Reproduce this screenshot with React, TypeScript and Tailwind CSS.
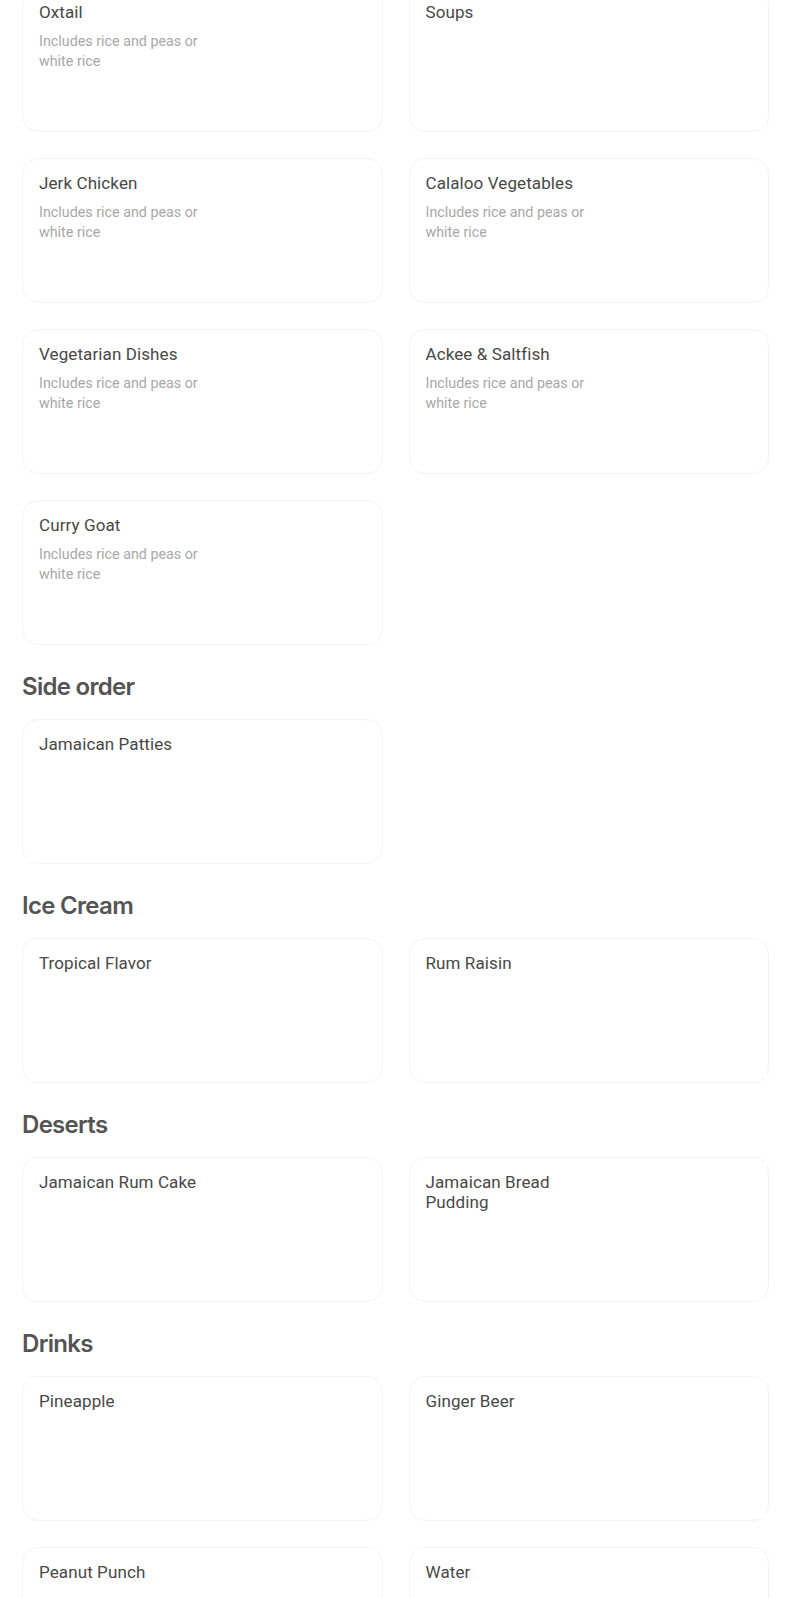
type Item = { name: string; description?: string };
type Section = { title?: string; items: Item[] };

const RICE = "Includes rice and peas or white rice";

const sections: Section[] = [
  {
    items: [
      { name: "Oxtail", description: RICE },
      { name: "Soups" },
      { name: "Jerk Chicken", description: RICE },
      { name: "Calaloo Vegetables", description: RICE },
      { name: "Vegetarian Dishes", description: RICE },
      { name: "Ackee & Saltfish", description: RICE },
      { name: "Curry Goat", description: RICE },
    ],
  },
  { title: "Side order", items: [{ name: "Jamaican Patties" }] },
  { title: "Ice Cream", items: [{ name: "Tropical Flavor" }, { name: "Rum Raisin" }] },
  {
    title: "Deserts",
    items: [{ name: "Jamaican Rum Cake" }, { name: "Jamaican Bread Pudding" }],
  },
  {
    title: "Drinks",
    items: [
      { name: "Pineapple" },
      { name: "Ginger Beer" },
      { name: "Peanut Punch" },
      { name: "Water" },
    ],
  },
];

function MenuCard({ item }: { item: Item }) {
  return (
    <div className="h-[145px] rounded-[16px] border border-[#f3f3f3] bg-white px-4 pt-[14px] pb-4">
      <div className="w-[170px]">
        <h3 className="text-[17px] leading-5 font-normal tracking-[0.1px] text-[#484848]">
          {item.name}
        </h3>
        {item.description && (
          <p className="mt-[9px] text-[14.3px] leading-5 text-[#a8a8a8]">{item.description}</p>
        )}
      </div>
    </div>
  );
}

export default function App() {
  return (
    <div
      className="min-h-screen bg-white pl-[22px] pr-[35px]"
      style={{ fontFamily: "Roboto, 'Liberation Sans', sans-serif" }}
    >
      {sections.map((section, i) => (
        <section key={i} className={i === 0 ? "-mt-[13px]" : ""}>
          {section.title && (
            <h2 className="mt-[26px] mb-4 font-['Inter',sans-serif] text-[24px] leading-8 font-semibold tracking-[-0.7px] text-[#545454]">
              {section.title}
            </h2>
          )}
          <div className="grid grid-cols-2 gap-[26px]">
            {section.items.map((item) => (
              <MenuCard key={item.name} item={item} />
            ))}
          </div>
        </section>
      ))}
    </div>
  );
}
